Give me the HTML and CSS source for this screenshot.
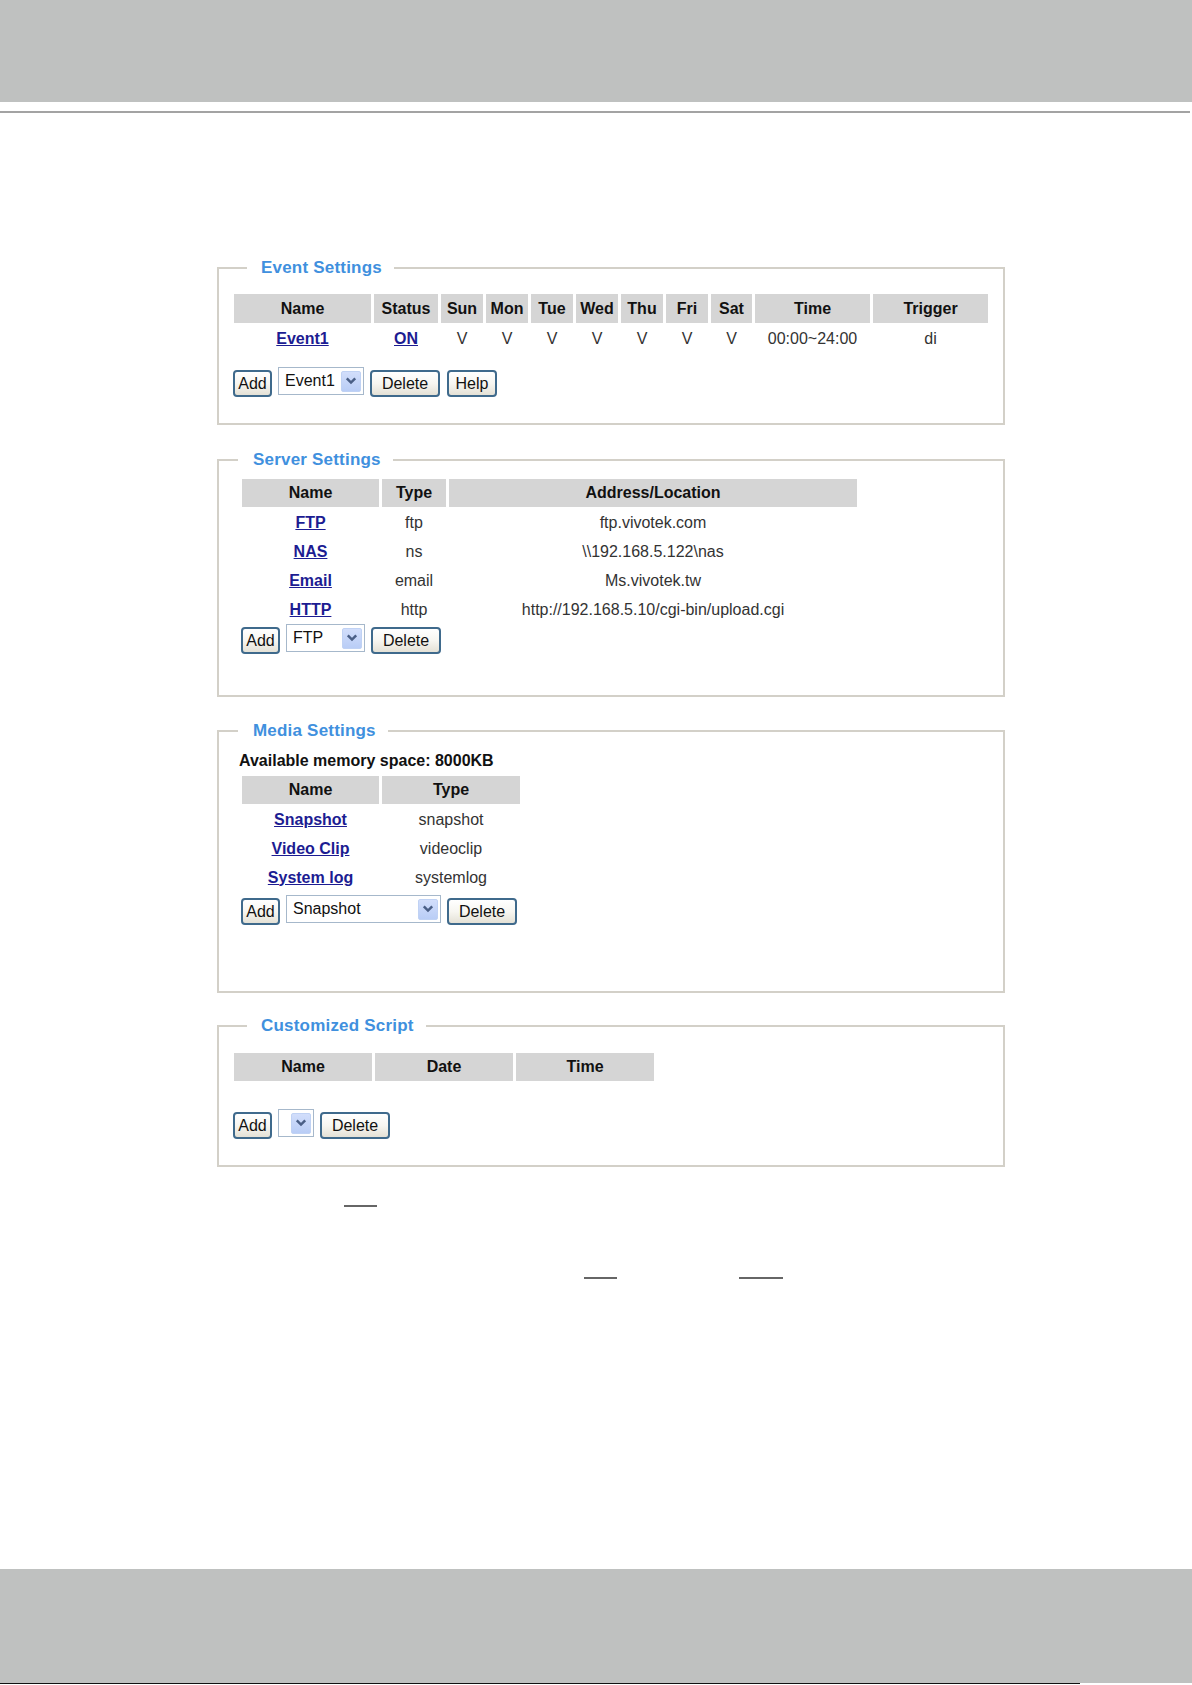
FILE: index.html
```html
<!DOCTYPE html>
<html>
<head>
<meta charset="utf-8">
<title>Event Settings</title>
<link rel="stylesheet" href="styles.css">
</head>
<body>
<div class="topbar"></div>
<div class="topline"></div>

<div class="main">
  <fieldset class="fs fs-event">
    <legend class="lg lg-wide">Event Settings</legend>
    <div class="body body-narrow">
      <table class="grid">
        <tr class="head">
          <th class="w137">Name</th><th class="w64">Status</th><th class="w42">Sun</th><th class="w42">Mon</th><th class="w42">Tue</th><th class="w42">Wed</th><th class="w42">Thu</th><th class="w42">Fri</th><th class="w41">Sat</th><th class="w115">Time</th><th class="w115">Trigger</th>
        </tr>
        <tr>
          <td><a href="#">Event1</a></td><td><a href="#">ON</a></td><td>V</td><td>V</td><td>V</td><td>V</td><td>V</td><td>V</td><td>V</td><td>00:00~24:00</td><td>di</td>
        </tr>
      </table>
      <div class="btnrow btnrow-event">
        <button class="btn b-add">Add</button>
        <div class="sel s-event"><span class="sel-text">Event1</span><span class="arrow"><svg width="12" height="8" viewBox="0 0 12 8"><path d="M1.8 1.4 L6 5.6 L10.2 1.4" fill="none" stroke="#4a5f86" stroke-width="2.5"/></svg></span></div>
        <button class="btn b-del">Delete</button>
        <button class="btn b-help">Help</button>
      </div>
    </div>
  </fieldset>

  <fieldset class="fs fs-server">
    <legend class="lg lg-narrow">Server Settings</legend>
    <div class="body body-wide">
      <table class="grid">
        <tr class="head"><th class="w137">Name</th><th class="w64">Type</th><th class="w408">Address/Location</th></tr>
        <tr><td><a href="#">FTP</a></td><td>ftp</td><td>ftp.vivotek.com</td></tr>
        <tr><td><a href="#">NAS</a></td><td>ns</td><td>\\192.168.5.122\nas</td></tr>
        <tr><td><a href="#">Email</a></td><td>email</td><td>Ms.vivotek.tw</td></tr>
        <tr><td><a href="#">HTTP</a></td><td>http</td><td>http://192.168.5.10/cgi-bin/upload.cgi</td></tr>
      </table>
      <div class="btnrow btnrow-server">
        <button class="btn b-add">Add</button>
        <div class="sel s-server"><span class="sel-text">FTP</span><span class="arrow"><svg width="12" height="8" viewBox="0 0 12 8"><path d="M1.8 1.4 L6 5.6 L10.2 1.4" fill="none" stroke="#4a5f86" stroke-width="2.5"/></svg></span></div>
        <button class="btn b-del">Delete</button>
      </div>
    </div>
  </fieldset>

  <fieldset class="fs fs-media">
    <legend class="lg lg-narrow">Media Settings</legend>
    <div class="body body-wide">
      <div class="mem">Available memory space: 8000KB</div>
      <table class="grid grid-media">
        <tr class="head"><th class="w137">Name</th><th class="w138">Type</th></tr>
        <tr><td><a href="#">Snapshot</a></td><td>snapshot</td></tr>
        <tr><td><a href="#">Video Clip</a></td><td>videoclip</td></tr>
        <tr><td><a href="#">System log</a></td><td>systemlog</td></tr>
      </table>
      <div class="btnrow btnrow-media">
        <button class="btn b-add">Add</button>
        <div class="sel s-media"><span class="sel-text">Snapshot</span><span class="arrow"><svg width="12" height="8" viewBox="0 0 12 8"><path d="M1.8 1.4 L6 5.6 L10.2 1.4" fill="none" stroke="#4a5f86" stroke-width="2.5"/></svg></span></div>
        <button class="btn b-del">Delete</button>
      </div>
    </div>
  </fieldset>

  <fieldset class="fs fs-custom">
    <legend class="lg lg-wide">Customized Script</legend>
    <div class="body body-narrow">
      <table class="grid">
        <tr class="head"><th class="w138">Name</th><th class="w138">Date</th><th class="w138">Time</th></tr>
      </table>
      <div class="btnrow btnrow-custom">
        <button class="btn b-add">Add</button>
        <div class="sel s-custom"><span class="sel-text"></span><span class="arrow"><svg width="12" height="8" viewBox="0 0 12 8"><path d="M1.8 1.4 L6 5.6 L10.2 1.4" fill="none" stroke="#4a5f86" stroke-width="2.5"/></svg></span></div>
        <button class="btn b-del">Delete</button>
      </div>
    </div>
  </fieldset>
</div>

<div class="notes">
  <div class="uline-row row1"><span class="uline u1"></span></div>
  <div class="uline-row row2"><span class="uline u2"></span><span class="uline u3"></span></div>
</div>

<div class="footer"></div>
<div class="footline"></div>
</body>
</html>
```

FILE: styles.css
```css
html, body {
  margin: 0;
  padding: 0;
  background: #ffffff;
}
body {
  font-family: "Liberation Sans", Arial, sans-serif;
  font-size: 16px;
  color: #333333;
  width: 1192px;
  overflow: hidden;
}
.topbar {
  height: 102px;
  background: #bfc1c0;
}
.topline {
  margin-top: 9px;
  height: 2px;
  width: 1190px;
  background: #a3a3a3;
}
.main {
  margin-left: 217px;
  width: 788px;
}
.fs {
  box-sizing: border-box;
  width: 788px;
  margin: 0;
  padding: 0;
  border: 2px solid #d3d0c8;
  min-inline-size: 0;
}
.fs-event { margin-top: 145px; padding-top: 14px; padding-bottom: 26px; }
.fs-server { margin-top: 25px; padding-top: 7px; padding-bottom: 41px; }
.fs-media { margin-top: 24px; padding-top: 10px; padding-bottom: 66px; }
.fs-custom { margin-top: 23px; padding-top: 15px; padding-bottom: 26px; }

.lg {
  font-size: 17px;
  line-height: 20px;
  font-weight: bold;
  color: #4090de;
  letter-spacing: 0.2px;
}
.lg-wide { margin-left: 28px; padding: 0 12px 0 14px; }
.lg-narrow { margin-left: 19px; padding: 0 12px 0 15px; }

.body-narrow { padding-left: 14px; }
.body-wide { padding-left: 22px; }

.grid {
  border-collapse: separate;
  border-spacing: 3px 2px;
  margin-left: -2px;
  table-layout: fixed;
}
.grid-media { margin-top: 3px; }
.grid th, .grid td {
  padding: 0;
  text-align: center;
  white-space: nowrap;
  box-sizing: border-box;
}
.grid th {
  height: 28px;
  background: #d5d5d5;
  color: #111111;
  font-weight: bold;
  font-size: 16px;
}
.fs-event .grid th { height: 29px; }
.grid td {
  height: 27px;
  color: #333333;
}
.grid a {
  color: #1c1c92;
  font-weight: bold;
  text-decoration: underline;
}
.w41 { width: 41px; }
.w42 { width: 42px; }
.w64 { width: 64px; }
.w115 { width: 115px; }
.w137 { width: 137px; }
.w138 { width: 138px; }
.w408 { width: 408px; }

.mem {
  margin-left: -2px;
  font-weight: bold;
  color: #111111;
  line-height: 20px;
}

.btnrow {
  display: flex;
  align-items: flex-start;
  gap: 6px;
  height: 30px;
}
.btnrow-event { margin-top: 13px; }
.btnrow-server { margin-top: -1px; }
.btnrow-media { margin-top: 2px; }
.btnrow-custom { margin-top: 26px; }

.btn {
  box-sizing: border-box;
  margin-top: 3px;
  height: 27px;
  padding: 0;
  border: 2px solid #3f6a8c;
  border-radius: 4px;
  background: linear-gradient(#ffffff 0%, #f7f6f1 50%, #e4e1d6 100%);
  font-family: "Liberation Sans", Arial, sans-serif;
  font-size: 16px;
  color: #111111;
  line-height: 21px;
}
.b-add { width: 39px; }
.b-del { width: 70px; }
.b-help { width: 50px; margin-left: 1px; }

.sel {
  box-sizing: border-box;
  height: 28px;
  border: 1px solid #a6b8cb;
  background: #ffffff;
  display: flex;
  align-items: center;
  justify-content: space-between;
  padding: 0 2px 0 6px;
}
.sel-text {
  font-size: 16px;
  color: #111111;
  margin-top: -1px;
}
.arrow {
  box-sizing: border-box;
  width: 20px;
  height: 21px;
  background: linear-gradient(#d2defb, #b9cdf6);
  border: 1px solid #c0d2f4;
  border-radius: 2px;
  display: flex;
  align-items: center;
  justify-content: center;
}
.s-event { width: 86px; }
.s-server { width: 79px; }
.s-media { width: 155px; }
.s-custom { width: 36px; }

.notes {
  margin-top: 38px;
}
.uline-row {
  display: flex;
  height: 2px;
}
.row2 { margin-top: 70px; }
.uline {
  height: 2px;
  background: #666666;
}
.u1 { width: 33px; margin-left: 344px; }
.u2 { width: 33px; margin-left: 584px; }
.u3 { width: 44px; margin-left: 122px; }

.footer {
  margin-top: 290px;
  height: 114px;
  background: #bfc1c0;
}
.footline {
  height: 1px;
  width: 1080px;
  background: #111111;
}
```
